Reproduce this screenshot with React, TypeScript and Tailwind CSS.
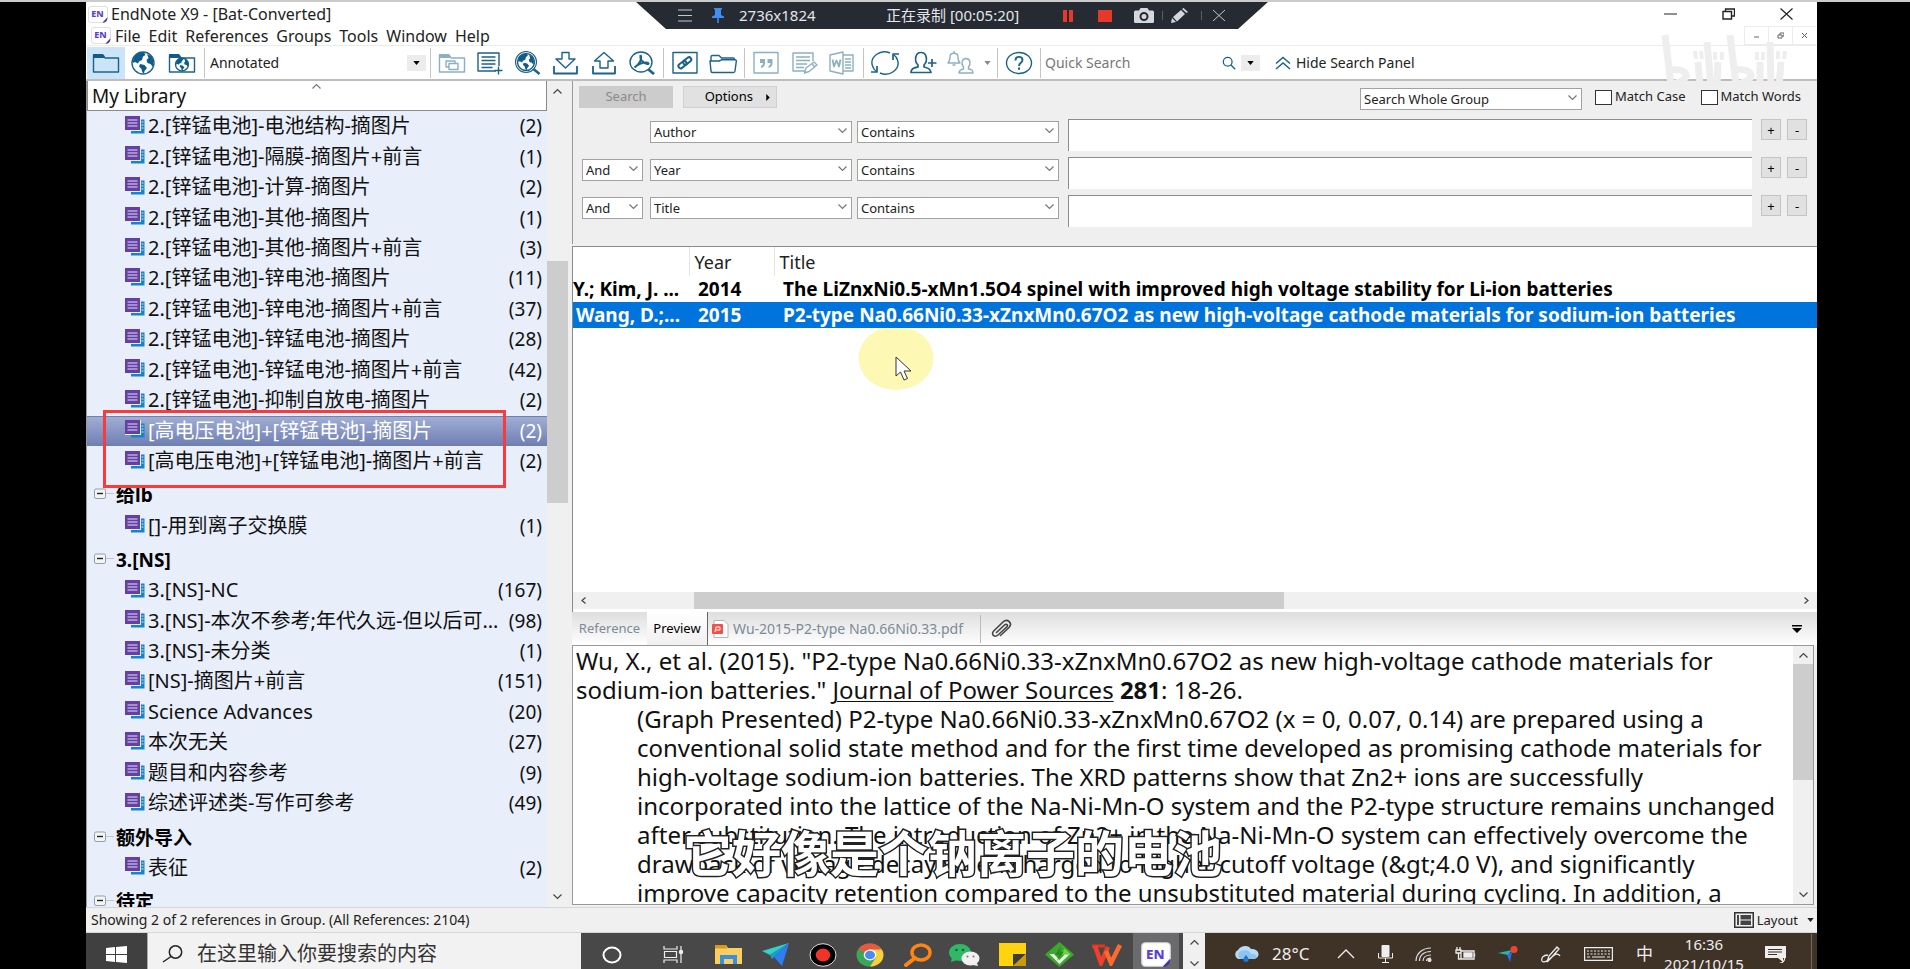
import React from "react";

const INK = "#1b6388";

type Row =
  | { kind: "group"; label: string; count: number; selected?: boolean }
  | { kind: "set"; label: string; clipped?: boolean };

const rows: Row[] = [
  { kind: "group", label: "2.[锌锰电池]-电池结构-摘图片", count: 2 },
  { kind: "group", label: "2.[锌锰电池]-隔膜-摘图片+前言", count: 1 },
  { kind: "group", label: "2.[锌锰电池]-计算-摘图片", count: 2 },
  { kind: "group", label: "2.[锌锰电池]-其他-摘图片", count: 1 },
  { kind: "group", label: "2.[锌锰电池]-其他-摘图片+前言", count: 3 },
  { kind: "group", label: "2.[锌锰电池]-锌电池-摘图片", count: 11 },
  { kind: "group", label: "2.[锌锰电池]-锌电池-摘图片+前言", count: 37 },
  { kind: "group", label: "2.[锌锰电池]-锌锰电池-摘图片", count: 28 },
  { kind: "group", label: "2.[锌锰电池]-锌锰电池-摘图片+前言", count: 42 },
  { kind: "group", label: "2.[锌锰电池]-抑制自放电-摘图片", count: 2 },
  { kind: "group", label: "[高电压电池]+[锌锰电池]-摘图片", count: 2, selected: true },
  { kind: "group", label: "[高电压电池]+[锌锰电池]-摘图片+前言", count: 2 },
  { kind: "set", label: "给lb" },
  { kind: "group", label: "[]-用到离子交换膜", count: 1 },
  { kind: "set", label: "3.[NS]" },
  { kind: "group", label: "3.[NS]-NC", count: 167 },
  { kind: "group", label: "3.[NS]-本次不参考;年代久远-但以后可...", count: 98 },
  { kind: "group", label: "3.[NS]-未分类", count: 1 },
  { kind: "group", label: "[NS]-摘图片+前言", count: 151 },
  { kind: "group", label: "Science Advances", count: 20 },
  { kind: "group", label: "本次无关", count: 27 },
  { kind: "group", label: "题目和内容参考", count: 9 },
  { kind: "group", label: "综述评述类-写作可参考", count: 49 },
  { kind: "set", label: "额外导入" },
  { kind: "group", label: "表征", count: 2 },
  { kind: "set", label: "待定", clipped: true },
];

const abstractLines = [
  "(Graph Presented) P2-type Na0.66Ni0.33-xZnxMn0.67O2 (x = 0, 0.07, 0.14) are prepared using a",
  "conventional solid state method and for the first time developed as promising cathode materials for",
  "high-voltage sodium-ion batteries. The XRD patterns show that Zn2+ ions are successfully",
  "incorporated into the lattice of the Na-Ni-Mn-O system and the P2-type structure remains unchanged",
  "after substitution. The introduction of Zn2+ in the Na-Ni-Mn-O system can effectively overcome the",
  "drawback of voltage decay when charged to higher cutoff voltage (&gt;4.0 V), and significantly",
  "improve capacity retention compared to the unsubstituted material during cycling. In addition, a",
];

function EnLogo({ big = false }: { big?: boolean }) {
  return (
    <svg viewBox="0 0 20 18" className={big ? "h-[25px] w-[30px]" : "h-[17px] w-[20px]"} preserveAspectRatio="none">
      <path d="M3 .5h14a2.500 2.500 0 0 1 2.500 2.500v9l-5 5.500H3A2.500 2.500 0 0 1 .5 15V3A2.500 2.500 0 0 1 3 .5z" fill="#fff" stroke="#d5d5dc" strokeWidth=".8" />
      <path d="M19.500 12l-5 5.800c3 0 5-1.500 5-5.800z" fill="#4b2fa8" />
      <text x="9.500" y="12" textAnchor="middle" fontFamily="Noto Sans, sans-serif" fontWeight="800" fontSize="9" fill="#5b3fd6">EN</text>
    </svg>
  );
}

function Chevron({ dir = "down", className = "" }: { dir?: "down" | "up" | "left" | "right"; className?: string }) {
  const d = { down: "M1.500 3.500l4 4 4-4", up: "M1.500 7.500l4-4 4 4", left: "M7.500 2.500l-3.500 3 3.500 3", right: "M3.500 2.500l3.500 3-3.500 3" }[dir];
  return (
    <svg viewBox="0 0 11 11" className={"h-[11px] w-[11px] " + className} fill="none" stroke="currentColor" strokeWidth="1.200">
      <path d={d} />
    </svg>
  );
}

function Caret({ className = "" }: { className?: string }) {
  return (
    <svg viewBox="0 0 8 5" className={"h-[4px] w-[7px] " + className} fill="currentColor">
      <path d="M0 0h8L4 5z" />
    </svg>
  );
}

function Ico({ children, faded = false }: { children: React.ReactNode; faded?: boolean }) {
  return (
    <svg viewBox="0 0 28 24" className={"h-[24px] w-[28px] " + (faded ? "opacity-50" : "")} fill="none" stroke={INK} strokeWidth="1.400" strokeLinejoin="round">
      {children}
    </svg>
  );
}

function Tool({ label, active = false, children }: { label: string; active?: boolean; children: React.ReactNode }) {
  return (
    <button aria-label={label} className={"flex h-[32px] w-[38px] shrink-0 items-center justify-center " + (active ? "bg-[#cce4f7]" : "")}>
      {children}
    </button>
  );
}

const Sep = () => <div className="mx-[2px] h-[30px] w-px shrink-0 bg-[#c4c4c4]" />;

function Globe({ cx, cy, r }: { cx: number; cy: number; r: number }) {
  return (
    <g transform={`translate(${cx} ${cy}) scale(${r / 11})`}>
      <circle r="11" fill="#fff" strokeWidth={(1.4 * 11) / r} />
      <path stroke="none" fill="#0f5c8c" d="M-9-6C-6-9.500-3-11 1-10.800L2.500-8 0-6.500-1-3l-3 1.500-1 2L-8-1l-2 1c0-3 0-4 1-6zM-3 1l4.500 1L4 5 1.500 8 1 10.500C-1 10-1 8-1.500 6L-4 3.500zM4-9l4 2 2.300 4L10 4 7.500 1 4.500 0 3.500-3l2-2z" />
    </g>
  );
}

function Toolbar() {
  return (
    <div role="toolbar" className="flex h-[35px] shrink-0 items-center overflow-hidden border-b-2 border-[#bdbdbd] bg-white pl-[1px]">
      <Tool label="Local library" active>
        <Ico><path d="M1.500 4.500h10l1.500 2.500h13.500v14H1.500z" /><path d="M1 3h10l2 4H1z" fill="#0f5c8c" stroke="none" /></Ico>
      </Tool>
      <Tool label="Online search"><Ico><Globe cx={13} cy={12} r={11} /></Ico></Tool>
      <Tool label="Integrated library">
        <Ico><path d="M1.500 4.500h10l1.500 2.500h13.500v14H1.500z" /><path d="M1 3h10l2 4H1z" fill="#0f5c8c" stroke="none" /><Globe cx={14} cy={13.5} r={6.500} /></Ico>
      </Tool>
      <div className="ml-[1px]"><Sep /></div>
      <label className="relative ml-[3px] flex h-[26px] w-[218px] shrink-0 items-center">
        <span className="sr-only">Output style</span>
        <select className="h-full w-full appearance-none pr-[20px] text-[14px] text-[#222]"><option>Annotated</option></select>
        <span className="pointer-events-none absolute right-[2px] top-[5px] flex h-[16px] w-[19px] items-center justify-center bg-[#ececec]"><Caret /></span>
      </label>
      <Sep />
      <Tool label="Copy folder">
        <Ico faded><path d="M1.500 4.500h10l1.500 2.500h13.500v14H1.500z" /><path d="M1 3h10l2 4H1z" fill={INK} stroke="none" /><rect x="8" y="10" width="9" height="6" /><rect x="11" y="12.500" width="9" height="6" fill="#fff" /></Ico>
      </Tool>
      <Tool label="New reference">
        <Ico><path d="M20 20H2V2h21v13" /><path d="M5.500 6h14M5.500 9.500h14M5.500 13h14M5.500 16.500h11" strokeWidth="1.700" /><path d="M22.500 15.500v8M18.500 19.500h8" /></Ico>
      </Tool>
      <Tool label="Online search mode">
        <Ico><circle cx="12" cy="11" r="10.500" strokeWidth="1.100" /><Globe cx={12} cy={11} r={8.500} /><path d="M19.500 18l6 5" strokeWidth="2.500" /></Ico>
      </Tool>
      <Tool label="Import">
        <Ico><path d="M10 1.500h7V8h6l-9.500 9L4 8h6z" /><path d="M2 15v7.500h23V15" strokeWidth="1.800" /></Ico>
      </Tool>
      <Tool label="Export">
        <Ico><path d="M10 17v-7H4.500L14 1.500 23.500 10H18v7z" /><path d="M3 15v7.500h22V15" strokeWidth="1.800" /></Ico>
      </Tool>
      <Tool label="Find full text">
        <Ico><ellipse cx="13" cy="11" rx="11" ry="10" /><path d="M20.500 18.500l5.500 4.500" strokeWidth="2.800" /><path d="M12.500 4c-1 4 2 8 7 9 1.500.3 1.500-1.500-1-1.500-5 0-9 2-12 5M12.500 4c2 4-1 9-6 12.500" strokeWidth="2" /></Ico>
      </Tool>
      <Sep />
      <Tool label="Open link">
        <Ico><rect x="2" y="1.500" width="24" height="20.500" /><g transform="rotate(-38 14 12)" strokeWidth="2"><rect x="6.500" y="9.500" width="9" height="4.500" rx="2.200" /><rect x="12.500" y="9.500" width="9" height="4.500" rx="2.200" /></g></Ico>
      </Tool>
      <Tool label="Open file">
        <Ico><path d="M2 19V6q0-1.500 1.500-1.500H10L12.500 7H24q1.500 0 1.500 1.500V10" /><path d="M1 10h9l2.500-1.200H26q1.500 0 1.300 1.500L26 20q-.2 1.500-1.500 1.500h-21Q2 21.500 2 20z" fill="#fff" /></Ico>
      </Tool>
      <Sep />
      <Tool label="Insert citation">
        <Ico faded><rect x="2" y="1.500" width="24" height="20.500" /><path d="M8 8h5v4q0 4-4 5v-2q2-.5 2-3H8zM15.500 8h5v4q0 4-4 5v-2q2-.5 2-3h-3z" fill={INK} stroke="none" /></Ico>
      </Tool>
      <Tool label="Format bibliography">
        <Ico faded><path d="M15 20H3V2h20v8" /><path d="M6 6h14M6 9.500h14M6 13h11M6 16.500h8" /><path d="M14.500 22l1.500-5 8-6 3 3-8 6.500z" fill="#fff" /><path d="M22 13l3 3" /></Ico>
      </Tool>
      <Tool label="Return to word processor">
        <Ico faded><path d="M2 4l13-3v22L2 20z" /><path d="M15 4h10v16H15M17 8h6M17 11h6M17 14h6M17 17h6" /><path d="M4.500 8.500l1.500 7 2.500-6 2.500 6 1.500-7" strokeWidth="1.800" /></Ico>
      </Tool>
      <Sep />
      <Tool label="Sync library">
        <Ico><path d="M1.500 15A12.500 11 0 0 1 19 2M26.500 9A12.500 11 0 0 1 9 22M22.500 3.500a12 10.500 0 0 1 4 5.500M5.500 20.500a12 10.500 0 0 1-4-5.500" /><path d="M28 3h-6v6M0 21h6v-6" strokeWidth="1.700" /></Ico>
      </Tool>
      <Tool label="Share library">
        <Ico><path d="M2 21.500c0-4 3-4.500 7-5.500v-2C5 10 6 1.500 12 1.500S19 10 15 14v2c4 1 6 1.500 7 5.500z" strokeWidth="1.700" /><path d="M23 8v8M19 12h8.500" strokeWidth="1.700" /></Ico>
      </Tool>
      <Tool label="Notifications">
        <Ico faded><path d="M1 12h12c-2-2-2-3-2-6 0-5-8-5-8 0 0 3 0 4-2 6zM7 0v2M5.500 14h3" /><path d="M12 22c0-3 2-3.500 4.500-4v-2c-2.500-3-2-8.500 2.500-8.500S24 13 21.500 16v2c3 .5 4.500 1 4.500 4z" /></Ico>
      </Tool>
      <Caret className="mx-[4px] shrink-0 text-[#8a8a8a]" />
      <Sep />
      <Tool label="Help">
        <Ico><ellipse cx="14" cy="12" rx="12.500" ry="10.500" /><path d="M10.500 9.500c0-5 7-4.500 7-.5 0 3-3.500 2.500-3.500 6" strokeWidth="1.900" /><path d="M14 16.500v2.300" strokeWidth="2" /></Ico>
      </Tool>
      <Sep />
      <input aria-label="Quick Search" placeholder="Quick Search" className="ml-[2px] w-[172px] shrink-0 text-[14px] outline-none placeholder:text-[#777]" />
      <button aria-label="Search" className="flex w-[24px] shrink-0 justify-center">
        <svg viewBox="0 0 16 16" className="h-[14px] w-[16px]" fill="none" stroke={INK} strokeWidth="1.500"><circle cx="6.500" cy="6.500" r="5" /><path d="M10.200 10.200l4.800 5" /></svg>
      </button>
      <button aria-label="Search options" className="flex h-[16px] w-[19px] shrink-0 items-center justify-center bg-[#ececec]"><Caret /></button>
      <button className="ml-[15px] flex shrink-0 items-center gap-[5px] text-[14px] text-[#222]">
        <svg viewBox="0 0 16 14" className="h-[14px] w-[16px]" fill="none" stroke={INK} strokeWidth="1.500"><path d="M1 7.500l7-6 7 6M1 13l7-6 7 6" /></svg>
        Hide Search Panel
      </button>
    </div>
  );
}

function GroupIcon() {
  return (
    <svg viewBox="0 0 20 18" className="mb-[3px] h-[18px] w-[20px] shrink-0">
      <path d="M6 3.500h13.500V17.500H6z" fill="#1484cc" />
      <path d="M16.500 6h2M16.500 9h2M16.500 12h2" stroke="#cfe6f8" strokeWidth="1" />
      <path d="M0 0h16v15H0z" fill="#e8eefa" />
      <path d="M0 0h15v14H0z" fill="#6440a4" />
      <path d="M2.500 4h10M2.500 7h10M2.500 10h10" stroke="#e5dcf5" strokeWidth="1.200" />
    </svg>
  );
}

function Sidebar() {
  return (
    <aside className="relative flex w-[486px] shrink-0 bg-[#f0f0f0]">
      <div className="flex min-w-0 flex-1 flex-col overflow-hidden border-l border-[#999] bg-[#e8eefa]">
        <button className="relative flex h-[30px] shrink-0 items-center border border-t-0 border-[#8a8a8a] bg-white pl-[4px] text-[19px] leading-[28px] text-[#111]">
          My Library
          <Chevron dir="up" className="absolute left-1/2 top-0 -ml-[6px] text-[#777]" />
        </button>
        <ul className="flex min-h-0 flex-1 flex-col overflow-hidden text-[#111]">
          {rows.map((row) =>
            row.kind === "set" ? (
              <li key={row.label} className={"flex shrink-0 gap-[1px] overflow-hidden pl-[7px] pt-[6px] text-[19px] font-bold text-black " + (row.clipped ? "basis-[24px]" : "basis-[34px]")}>
                <svg viewBox="0 0 20 12" className="mt-[6px] h-[12px] w-[20px] shrink-0">
                  <rect x=".5" y="1" width="11" height="9.500" rx="1.500" fill="#f4f4f0" stroke="#8da0b4" />
                  <path d="M3 5.500h6" stroke="#222" strokeWidth="1.400" />
                  <path d="M12.500 5.500h7" stroke="#9a9a9a" strokeDasharray="1 1" />
                </svg>
                <span className="ml-[1px] leading-[26px]">{row.label}</span>
              </li>
            ) : (
              <li
                key={row.label}
                className={"flex shrink-0 grow basis-[30px] items-center pl-[38px] pr-[5px] " + (row.selected ? "border-y border-[#6d7fb3] bg-linear-to-b from-[#a0aed3] to-[#7080b4] text-white" : "")}
              >
                <GroupIcon />
                <span className="ml-[3px] min-w-0 flex-1 truncate whitespace-nowrap text-[20px] leading-[28px]">{row.label}</span>
                <span className="text-[19px] leading-[28px]">({row.count})</span>
              </li>
            ),
          )}
        </ul>
      </div>
      <div className="mr-[4px] flex w-[21px] shrink-0 flex-col items-center bg-[#f0f0f0] py-[5px] text-[#444]">
        <Chevron dir="up" />
        <div className="mt-[164px] h-[242px] w-full bg-[#cdcdcd]" />
        <Chevron className="mt-auto" />
      </div>
      <div className="absolute left-[17px] top-[329px] h-[78px] w-[403px] border-3 border-[#fb3b3b]" />
    </aside>
  );
}

function Pick({ label, value, className }: { label: string; value: string; className: string }) {
  return (
    <div className={"relative h-[22px] shrink-0 " + className}>
      <select aria-label={label} className="h-full w-full appearance-none border border-[#a2a2a2] bg-white pl-[3px] text-[13px] leading-[18px] text-[#222]">
        <option>{value}</option>
      </select>
      <Chevron className="pointer-events-none absolute right-[4px] top-[6px] text-[#777]" />
    </div>
  );
}

function SearchPanel() {
  const terms = [
    { op: "", field: "Author" },
    { op: "And", field: "Year" },
    { op: "And", field: "Title" },
  ];
  return (
    <form className="flex h-[163px] shrink-0 flex-col border-l border-[#999] bg-[#efefef] pl-[6px] pr-[10px] pt-[5px]">
      <div className="flex h-[22px] items-center">
        <button type="button" disabled className="h-[22px] w-[94px] bg-[#cccccc] text-[13px] text-[#8b8b8b]">Search</button>
        <button type="button" className="ml-[10px] flex h-[22px] w-[94px] items-center justify-end gap-[13px] border border-[#d0d0d0] bg-[#e1e1e1] pr-[6px] text-[13px] text-black">
          Options
          <svg viewBox="0 0 4 8" className="h-[7px] w-[4px]"><path d="M0 0l4 4-4 4z" /></svg>
        </button>
        <Pick label="Search scope" value="Search Whole Group" className="ml-auto w-[222px]" />
        <label className="ml-[13px] flex items-center gap-[3px] text-[13px] text-[#222]">
          <input type="checkbox" className="h-[15px] w-[17px] appearance-none border border-[#333] bg-white" />Match Case
        </label>
        <label className="ml-[15px] mr-[6px] flex items-center gap-[3px] text-[13px] text-[#222]">
          <input type="checkbox" className="h-[15px] w-[17px] appearance-none border border-[#333] bg-white" />Match Words
        </label>
      </div>
      <div className="mt-[11px] flex flex-col gap-[6px]">
        {terms.map((t) => (
          <div key={t.field} className="flex h-[32px] items-start">
            <div className="ml-[3px] w-[68px] shrink-0">{t.op && <Pick label="Operator" value={t.op} className="w-[61px]" />}</div>
            <Pick label="Field" value={t.field} className="w-[202px]" />
            <Pick label="Comparison" value="Contains" className="ml-[5px] w-[202px]" />
            <input aria-label={t.field + " term"} className="ml-[9px] h-[32px] min-w-0 flex-1 border-l border-t border-[#8c8c8c] bg-white outline-none" />
            <button type="button" aria-label="Add row" className="ml-[9px] h-[21px] w-[20px] border border-[#c4c4c4] bg-[#e1e1e1] text-[13px] leading-[18px]">+</button>
            <button type="button" aria-label="Remove row" className="ml-[6px] h-[21px] w-[20px] border border-[#c4c4c4] bg-[#e1e1e1] text-[13px] leading-[18px]">-</button>
          </div>
        ))}
      </div>
    </form>
  );
}

function Results() {
  return (
    <section className="relative mt-[2px] flex min-h-0 flex-1 flex-col border-l border-t border-[#8a8a8a] bg-white">
      <table className="w-full table-fixed border-collapse text-left text-[19px] leading-[26px] whitespace-nowrap">
        <thead>
          <tr className="h-[29px] text-[18px] text-[#222]">
            <th className="w-[116px] border-r border-[#e4e4e4]"><span className="sr-only">Author</span></th>
            <th className="w-[85px] border-r border-[#e4e4e4] pl-[5px] font-normal">Year</th>
            <th className="pl-[5px] font-normal">Title</th>
          </tr>
        </thead>
        <tbody className="font-bold">
          <tr className="h-[26px] text-black">
            <td>Y.; Kim, J. ...</td>
            <td className="pl-[9px]">2014</td>
            <td className="pl-[9px]">The LiZnxNi0.5-xMn1.5O4 spinel with improved high voltage stability for Li-ion batteries</td>
          </tr>
          <tr className="h-[26px] bg-[#0173dc] text-white">
            <td className="pl-[3px]">Wang, D.;...</td>
            <td className="pl-[9px]">2015</td>
            <td className="pl-[9px]">P2-type Na0.66Ni0.33-xZnxMn0.67O2 as new high-voltage cathode materials for sodium-ion batteries</td>
          </tr>
        </tbody>
      </table>
      <svg viewBox="0 0 76 62" className="absolute left-[285px] top-[81px] h-[62px] w-[76px]">
        <ellipse cx="38" cy="30" rx="37.500" ry="32" fill="#fdf8b4" />
        <path d="M38 29v19l4.500-4 3.500 8 3.500-1.500-3.500-7.500h7z" fill="#fff" stroke="#333" />
      </svg>
      <div className="mb-[3px] mt-auto flex h-[17px] items-center bg-[#f0f0f0] px-[5px] text-[#444]">
        <Chevron dir="left" />
        <div className="ml-[105px] h-full w-[590px] bg-[#cdcdcd]" />
        <Chevron dir="right" className="ml-auto" />
      </div>
    </section>
  );
}

function Preview() {
  return (
    <section className="flex h-[295px] shrink-0 flex-col bg-[#f0f0f0]">
      <div role="tablist" className="flex h-[33px] shrink-0 items-center bg-linear-to-b from-[#dedede] to-white text-[14px] text-[#7b8b98]">
        <button role="tab" className="w-[75px] text-[13px]">Reference</button>
        <button role="tab" aria-selected="true" className="h-full w-[61px] border-r border-[#666] bg-linear-to-b from-white to-[#f0f0f0] text-[13px] text-black">Preview</button>
        <button role="tab" className="flex h-full w-[272px] items-center gap-[4px] pl-[4px]">
          <svg viewBox="0 0 17 18" className="h-[18px] w-[17px]">
            <path d="M2 .5h10l4 4v13H2z" fill="#fff" stroke="#b5b5b5" />
            <rect x="0" y="4" width="11" height="10" rx="1" fill="#f2514b" />
            <path d="M3 12l1-5h4v3H4" fill="none" stroke="#fff" />
          </svg>
          Wu-2015-P2-type Na0.66Ni0.33.pdf
        </button>
        <div className="h-[28px] w-px bg-[#bbb]" />
        <button aria-label="Attach file" className="ml-[9px]">
          <svg viewBox="0 0 22 20" className="h-[20px] w-[22px]" fill="none" stroke="#444" strokeWidth="1.600">
            <path d="M6.500 13.500l8-7.500c2-1.800 4 .2 2.200 2L8 16c-3.500 3-7.500-.5-4.300-4L13 3c4.500-4 10 1 6 5.500l-8.500 8" strokeLinecap="round" />
          </svg>
        </button>
        <button aria-label="Panel menu" className="ml-auto mr-[15px]">
          <svg viewBox="0 0 10 8" className="h-[8px] w-[10px]"><path d="M0 0h10v1.500H0zM0 3h10L5 8z" /></svg>
        </button>
      </div>
      <div className="mb-[2px] mr-[3px] flex min-h-0 flex-1 border border-[#999] bg-white">
        <div className="min-w-0 flex-1 overflow-hidden whitespace-nowrap pl-[3px] text-[24px] leading-[29px] text-[#111]">
          <p>
            Wu, X., et al. (2015). "P2-type Na0.66Ni0.33-xZnxMn0.67O2 as new high-voltage cathode materials for
            <br />
            sodium-ion batteries." <u className="decoration-1 underline-offset-2">Journal of Power Sources</u> <b>281</b>: 18-26.
          </p>
          <p className="pl-[61px]">
            {abstractLines.map((l) => (
              <span key={l} className="block">{l}</span>
            ))}
          </p>
        </div>
        <div className="flex w-[20px] shrink-0 flex-col items-center bg-[#f0f0f0] py-[4px] text-[#444]">
          <Chevron dir="up" />
          <div className="mt-[3px] h-[116px] w-full bg-[#cdcdcd]" />
          <Chevron className="mt-auto" />
        </div>
      </div>
    </section>
  );
}

function RecorderBar() {
  return (
    <div className="absolute left-[636px] top-[2px] flex h-[27px] w-[632px] items-center bg-[#262b33] pl-[42px] text-[15px] text-[#e4e6ea] [clip-path:polygon(0_0,100%_0,602px_100%,30px_100%)]">
      <svg viewBox="0 0 14 13" className="h-[13px] w-[14px]" stroke="#c5c8cd" strokeWidth="1.200"><path d="M0 1h14M0 6.500h14M0 12h14" /></svg>
      <svg viewBox="0 0 12 15" className="ml-[20px] h-[15px] w-[12px]" fill="#3f8ef0"><path d="M2 0h8v1.500H9V7l3 1.500V10H6.800v5H5.200v-5H0V8.500L3 7V1.500H2z" /></svg>
      <span className="ml-[15px] w-[147px]">2736x1824</span>
      <span className="w-[177px]">正在录制 [00:05:20]</span>
      <svg viewBox="0 0 10 12" className="h-[12px] w-[10px]" fill="#e5392b"><path d="M0 0h4v12H0zM6 0h4v12H6z" /></svg>
      <span className="ml-[25px] h-[12px] w-[14px] bg-[#e5392b]" />
      <svg viewBox="0 0 20 15" className="ml-[22px] h-[15px] w-[20px]" fill="#d4d8de"><path fillRule="evenodd" d="M1.500 2.500H5L6.500 0h7L15 2.500h3.500Q20 2.500 20 4v9.500q0 1.500-1.500 1.500h-17Q0 15 0 13.500V4q0-1.500 1.500-1.500zM10 4a4.500 4.500 0 1 0 0 9 4.500 4.500 0 0 0 0-9zm0 2a2.500 2.500 0 1 1 0 5 2.500 2.500 0 0 1 0-5z" /></svg>
      <span className="ml-[8px] h-[9px] w-px bg-[#596069]" />
      <svg viewBox="0 0 17 15" className="ml-[8px] h-[15px] w-[17px]" fill="#d4d8de"><path d="M0 15l1-5 4 4zM2 9l8-7 4 4-8 7.500zM11 1l1.500-1L17 4l-1.500 1z" /></svg>
      <span className="ml-[13px] h-[9px] w-px bg-[#596069]" />
      <svg viewBox="0 0 12 11" className="ml-[11px] h-[11px] w-[12px]" stroke="#c5c8cd"><path d="M0 0l12 11M12 0L0 11" /></svg>
    </div>
  );
}

function Watermark() {
  return (
    <svg viewBox="0 0 128 58" className="pointer-events-none absolute right-[122px] top-[34px] h-[58px] w-[128px] text-[#eeeeee]" fill="none" stroke="currentColor" strokeWidth="7">
      <path d="M5 1l6 50M9 36c16-2 24 6 10 12l-8 3M47 8l4 44M38 28l2 24M58 28l-1 24M70 1l6 50M74 36c16-2 24 6 10 12l-8 3M110 8l1 44M100 28l0 24M121 28l-2 24" />
      <path d="M35 17l1 8M41 17l1 8M55 18v8M62 18v8M97 18v8M103 18v8M118 17v8M125 17l-1 8" strokeWidth="4" />
    </svg>
  );
}

function Taskbar() {
  const slot = "flex h-full w-[47px] shrink-0 items-center justify-center pt-[7px]";
  return (
    <footer className="flex h-[36px] shrink-0 overflow-hidden bg-[#f0f0f0] text-[#eee]">
      <button aria-label="Start" className="flex h-full w-[61px] shrink-0 items-center justify-center bg-[#404040] pt-[6px]">
        <svg viewBox="0 0 21 17" className="h-[17px] w-[21px]" fill="#fff"><path d="M0 2l9-1v7H0zM10 1l11-1v8H10zM0 9h9v7l-9-1zM10 9h11v8l-11-1z" /></svg>
      </button>
      <label className="flex w-[434px] shrink-0 items-center border-l border-[#aaa] bg-[#f2f2f2] pl-[14px] pt-[6px]">
        <span className="sr-only">Search</span>
        <svg viewBox="0 0 21 18" className="h-[18px] w-[21px] shrink-0" fill="none" stroke="#222" strokeWidth="1.500"><circle cx="13.500" cy="7" r="6.200" /><path d="M9 11.500L1 17" /></svg>
        <input placeholder="在这里输入你要搜索的内容" className="ml-[14px] w-[380px] text-[20px] outline-none placeholder:text-[#333]" />
      </label>
      <div className="flex w-[602px] shrink-0 items-center bg-[#484848] pl-[1px]">
        <button aria-label="Cortana" className="flex h-full w-[60px] shrink-0 items-center justify-center pt-[7px]">
          <svg viewBox="0 0 20 18" className="h-[18px] w-[20px]" fill="none" stroke="#fff" strokeWidth="2"><ellipse cx="10" cy="9" rx="8.500" ry="7.500" /></svg>
        </button>
        <button aria-label="Task view" className="flex h-full w-[62px] shrink-0 items-center justify-center pt-[7px]">
          <svg viewBox="0 0 21 17" className="h-[17px] w-[21px]" fill="none" stroke="#eee" strokeWidth="1.200"><path d="M1 0v3h13V0M1 17v-3h13v3M1.500 5.500h12v6h-12zM18 0v4M18 8v9" /><circle cx="18" cy="6" r="1.600" fill="#eee" /></svg>
        </button>
        <div className="flex h-full flex-1 justify-between pl-[1px] pr-[3px]">
        <button aria-label="File Explorer" className={slot}>
          <svg viewBox="0 0 27 19" className="h-[19px] w-[27px]"><path d="M0 0h11l2 3h14v16H0z" fill="#f9cf62" /><path d="M0 0h11l1 3.500H0z" fill="#d99a1c" /><path d="M5 19v-9h17v9h-4v-5H9v5z" fill="#3b8fdc" /></svg>
        </button>
        <button aria-label="Messenger" className={slot}>
          <svg viewBox="0 0 27 23" className="h-[23px] w-[27px]"><path d="M27 0L0 8l8 4z" fill="#35d0c8" /><path d="M27 0L8 12l2 4z" fill="#1a9ed0" /><path d="M27 0L12 14l8 9z" fill="#2f7df4" /></svg>
        </button>
        <button aria-label="Recorder" className={slot}>
          <svg viewBox="0 0 28 24" className="h-[24px] w-[28px]"><ellipse cx="14" cy="12" rx="13" ry="11.300" fill="#000" stroke="#ddd" /><ellipse cx="14" cy="12" rx="7.300" ry="6.500" fill="#f03428" /></svg>
        </button>
        <button aria-label="Chrome" className={slot}>
          <svg viewBox="0 0 28 24" preserveAspectRatio="none" className="h-[24px] w-[28px]">
            <g transform="translate(14 12) scale(1 .86)"><circle r="13.500" fill="#3aa757" /><path d="M0 0L-11.700-6.750A13.500 13.500 0 0 1 11.700-6.750z" fill="#e8573f" /><path d="M0-6.500H11.800A13.500 13.500 0 0 1 0 13.500L6 3z" fill="#fbcf3c" /><circle r="6.300" fill="#fff" /><circle r="5" fill="#4a8af4" /></g>
          </svg>
        </button>
        <button aria-label="Everything" className={slot}>
          <svg viewBox="0 0 28 24" className="h-[24px] w-[28px]" fill="none" stroke="#ff8412"><ellipse cx="17" cy="9.500" rx="9" ry="7.500" strokeWidth="3.500" /><path d="M11 15l-9 7" strokeWidth="4" strokeLinecap="round" /></svg>
        </button>
        <button aria-label="WeChat" className={slot}>
          <svg viewBox="0 0 31 22" className="h-[22px] w-[31px]"><ellipse cx="11" cy="8.500" rx="11" ry="8.500" fill="#30b866" /><path d="M3 13l-1 5 6-2z" fill="#30b866" /><ellipse cx="21.500" cy="14.500" rx="9" ry="7" fill="#f0f0f0" /><path d="M28 19l1 3-5-1z" fill="#f0f0f0" /><g fill="#17643a"><circle cx="7.500" cy="6" r="1.300" /><circle cx="14" cy="6" r="1.300" /></g><g fill="#777"><circle cx="18.500" cy="12.500" r="1" /><circle cx="24.500" cy="12.500" r="1" /></g></svg>
        </button>
        <button aria-label="Sticky Notes" className={slot}>
          <svg viewBox="0 0 27 23" className="h-[23px] w-[27px]"><path d="M0 0h27v23H0z" fill="#ffd30d" /><path d="M14 11h13L14 23z" fill="#3b3b3b" /><path d="M27 11v12H14z" fill="#c79a10" /></svg>
        </button>
        <button aria-label="Transfer tool" className={slot}>
          <svg viewBox="0 0 29 25" className="h-[25px] w-[29px]"><path d="M14.500 0L29 12.500 14.500 25 0 12.500z" fill="#3aa82b" /><path d="M14.500 2L26 12.500H14l6-6z" fill="#6bd548" /><path d="M4.500 12h4.500l5.500 6 5-5.500h5L14.500 22z" fill="#e8f2e4" /><path d="M16 4l-6 9h4l-2 6 7-9.500h-4z" fill="#2b8a20" /></svg>
        </button>
        <button aria-label="WPS Office" className={slot}>
          <svg viewBox="0 0 30 22" className="h-[22px] w-[30px]" fill="none" strokeWidth="4.500"><path d="M0 2h13" stroke="#e8331c" strokeWidth="3" /><path d="M3 2l6 17L16 3" stroke="#f0402a" /><path d="M14 7l5 12L28 1" stroke="#ff6a2c" /></svg>
        </button>
        </div>
        <button aria-label="EndNote" className="mr-[4px] flex h-full w-[46px] shrink-0 items-center justify-center bg-[#6b6b6e] pt-[6px]"><EnLogo big /></button>
      </div>
      <div className="flex w-[22px] shrink-0 flex-col items-center justify-between pt-[4px] text-[#444]"><Chevron dir="up" /><Chevron /></div>
      <div className="flex min-w-0 flex-1 items-center bg-[#3f3327] pt-[6px]">
        <div className="flex w-[124px] shrink-0 items-center gap-[13px] pl-[28px] text-[17px]">
          <svg viewBox="0 0 26 17" className="h-[17px] w-[26px] shrink-0"><path d="M5 13a5 5 0 0 1 0-9C8-1 16-1 18 3c9-.5 10 9 3 10z" fill="#b8dcf6" /><path d="M8 13a5 4.500 0 0 1 2-8.500c5-1 8 2 8 4 6-2 8 4 3 4.500z" fill="#8fc4ef" /><path d="M13 9c4 4 3 7 0 7s-4-3 0-7z" fill="#1e78d0" /></svg>
          28°C
        </div>
        <div className="flex flex-1 items-center justify-between pl-[8px] pr-[6px]">
          <svg viewBox="0 0 18 10" className="h-[10px] w-[18px]" fill="none" stroke="#eee" strokeWidth="1.300"><path d="M1 9l8-8 8 8" /></svg>
          <svg viewBox="0 0 15 18" className="h-[18px] w-[15px]" fill="#eee"><rect x="3.500" y="0" width="8" height="12" rx="1" /><path d="M.5 8v5h14V8M7.500 13v5M4 17.500h7" fill="none" stroke="#eee" /></svg>
          <svg viewBox="0 0 17 15" className="h-[15px] w-[17px]" fill="none" stroke="#ddd" strokeWidth="1.200"><path d="M1 14C1 6 8 1 16 1M4.500 14C4.500 8 9 4.500 16 4.500M8 14c0-3.500 3-6 8-6M11.500 14c0-2 2-3 4.500-3" /><circle cx="14.500" cy="13" r="1.500" fill="#eee" /></svg>
          <svg viewBox="0 0 21 14" className="h-[14px] w-[21px]" fill="none" stroke="#eee" strokeWidth="1.300"><path d="M6 4h13v8H6zM19.500 6.500v3M1 3h5v3H1zM2 0v3M5 0v3M3.500 6v6H6" /><path d="M9 6h8v4H9z" fill="#eee" /></svg>
          <svg viewBox="0 0 20 16" className="h-[16px] w-[20px]"><path d="M0 7l14-3-4 5z" fill="#22b8b0" /><path d="M9 9l5-3-2 10z" fill="#2a6ff0" /><circle cx="16" cy="3.500" r="3.500" fill="#f0442f" /></svg>
          <svg viewBox="0 0 21 17" className="h-[17px] w-[21px]" fill="none" stroke="#eee" strokeWidth="1.300"><path d="M6 16l2-6 8-9 2 2-8 9zM7 9c-5 0-7 3-6 6 2 3 8-2 11-5s6-2 7 0" /></svg>
          <svg viewBox="0 0 29 14" className="h-[14px] w-[29px]" fill="none" stroke="#eee" strokeWidth="1.200"><path d="M.6.600h27.800v12.800H.6z" /><path d="M3 4h23M3 7h23" strokeDasharray="2 1.500" /><path d="M3 10h3M8 10h13M23 10h3" /></svg>
          <span className="text-[17px] leading-[18px]">中</span>
        </div>
        <div className="flex h-[40px] w-[90px] shrink-0 flex-col items-center text-[15px] leading-[20px]">
          <time>16:36</time>
          <span>2021/10/15</span>
        </div>
        <svg viewBox="0 0 21 17" className="ml-[16px] mr-[25px] h-[17px] w-[21px] shrink-0" fill="#eee"><path d="M0 0h21v12h-3v4l-5-4H0z" /><path d="M3 3.500h14M3 6h14M3 8.500h9" stroke="#3f3327" /><path d="M14 17a4.500 4.500 0 0 0 4-8 5 5 0 0 1-4 8z" /></svg>
        <div className="mr-[5px] h-[40px] w-px shrink-0 bg-[#75695c]" />
      </div>
    </footer>
  );
}

export default function App() {
  const menus = ["File", "Edit", "References", "Groups", "Tools", "Window", "Help"];
  return (
    <div className="relative flex h-screen w-full flex-col overflow-hidden bg-black font-['Noto_Sans','Noto_Sans_CJK_SC',sans-serif]">
      <div className="h-[2px] shrink-0 bg-[#cbcbcb]" />
      <div className="ml-[86px] mr-[93px] flex min-h-0 flex-1 flex-col bg-[#f0f0f0]">
        <header className="shrink-0 bg-white text-[16px] leading-[20px] text-[#222]">
          <div className="flex h-[24px] items-center">
            <div className="ml-[2px] flex items-center gap-[3px]"><EnLogo />EndNote X9 - [Bat-Converted]</div>
            <div className="ml-auto flex h-full text-[#222]">
              <button aria-label="Minimize" className="flex w-[58px] items-center justify-center"><svg viewBox="0 0 13 12" className="h-[12px] w-[13px]" stroke="currentColor"><path d="M0 6h13" /></svg></button>
              <button aria-label="Restore" className="flex w-[58px] items-center justify-center"><svg viewBox="0 0 13 12" className="h-[12px] w-[13px]" fill="none" stroke="currentColor" strokeWidth="1.400"><path d="M1 3.500h8.500V11H1zM3.500 3.500V1h9v7H9.500" /></svg></button>
              <button aria-label="Close" className="mr-[2px] flex w-[58px] items-center justify-center"><svg viewBox="0 0 13 12" className="h-[12px] w-[13px]" stroke="currentColor" strokeWidth="1.200"><path d="M.5.500l12 11M12.500.500l-12 11" /></svg></button>
            </div>
          </div>
          <div className="flex h-[20px] items-center border-b border-[#ececec]">
            <div className="ml-[5px] mr-[4px]"><EnLogo /></div>
            <nav className="flex gap-[8px]">
              {menus.map((m) => <button key={m}>{m}</button>)}
            </nav>
            <div className="ml-auto mr-[1px] flex h-full text-[#666]">
              {["M1 5h5", "M1 3h4v3H1zM3 3V1h4v3H5", "M1 1l5 5M6 1L1 6"].map((d, i) => (
                <button key={d} aria-label={["Minimize document", "Restore document", "Close document"][i]} className="flex w-[24px] items-center justify-center border border-r-0 border-[#ececec]">
                  <svg viewBox="0 0 7 7" className="h-[7px] w-[7px]" fill="none" stroke="currentColor"><path d={d} /></svg>
                </button>
              ))}
            </div>
          </div>
        </header>
        <Toolbar />
        <div className="flex min-h-0 flex-1">
          <Sidebar />
          <main className="flex min-w-0 flex-1 flex-col">
            <SearchPanel />
            <Results />
            <Preview />
          </main>
        </div>
        <div className="flex h-[26px] shrink-0 items-center border-y border-[#d6d6d6] bg-[#f0f0f0] pl-[5px] text-[14px] leading-[20px] text-[#222]">
          Showing 2 of 2 references in Group. (All References: 2104)
          <button className="ml-auto mr-[3px] flex items-center gap-[3px] text-[13px]">
            <svg viewBox="0 0 20 16" className="h-[16px] w-[20px]"><path d="M.75.750h18.500v14.500H.75z" fill="none" stroke="#333" strokeWidth="1.500" /><path d="M3 3h2v10H3zM6.500 3H17v4.500H6.500zM6.500 8.500H17V13H6.500z" fill="#444" /></svg>
            Layout
            <Caret className="ml-[6px]" />
          </button>
        </div>
        <Taskbar />
      </div>
      <RecorderBar />
      <div className="pointer-events-none absolute right-[256px] top-[44px] text-[32px] leading-[40px] text-black/2">LAB</div>
      <Watermark />
      <div className="absolute left-[683px] top-[821px] text-[49px] leading-[64px] font-bold whitespace-nowrap text-white [-webkit-text-stroke:3px_#222] [paint-order:stroke_fill]">它好像是个钠离子的电池</div>
    </div>
  );
}
